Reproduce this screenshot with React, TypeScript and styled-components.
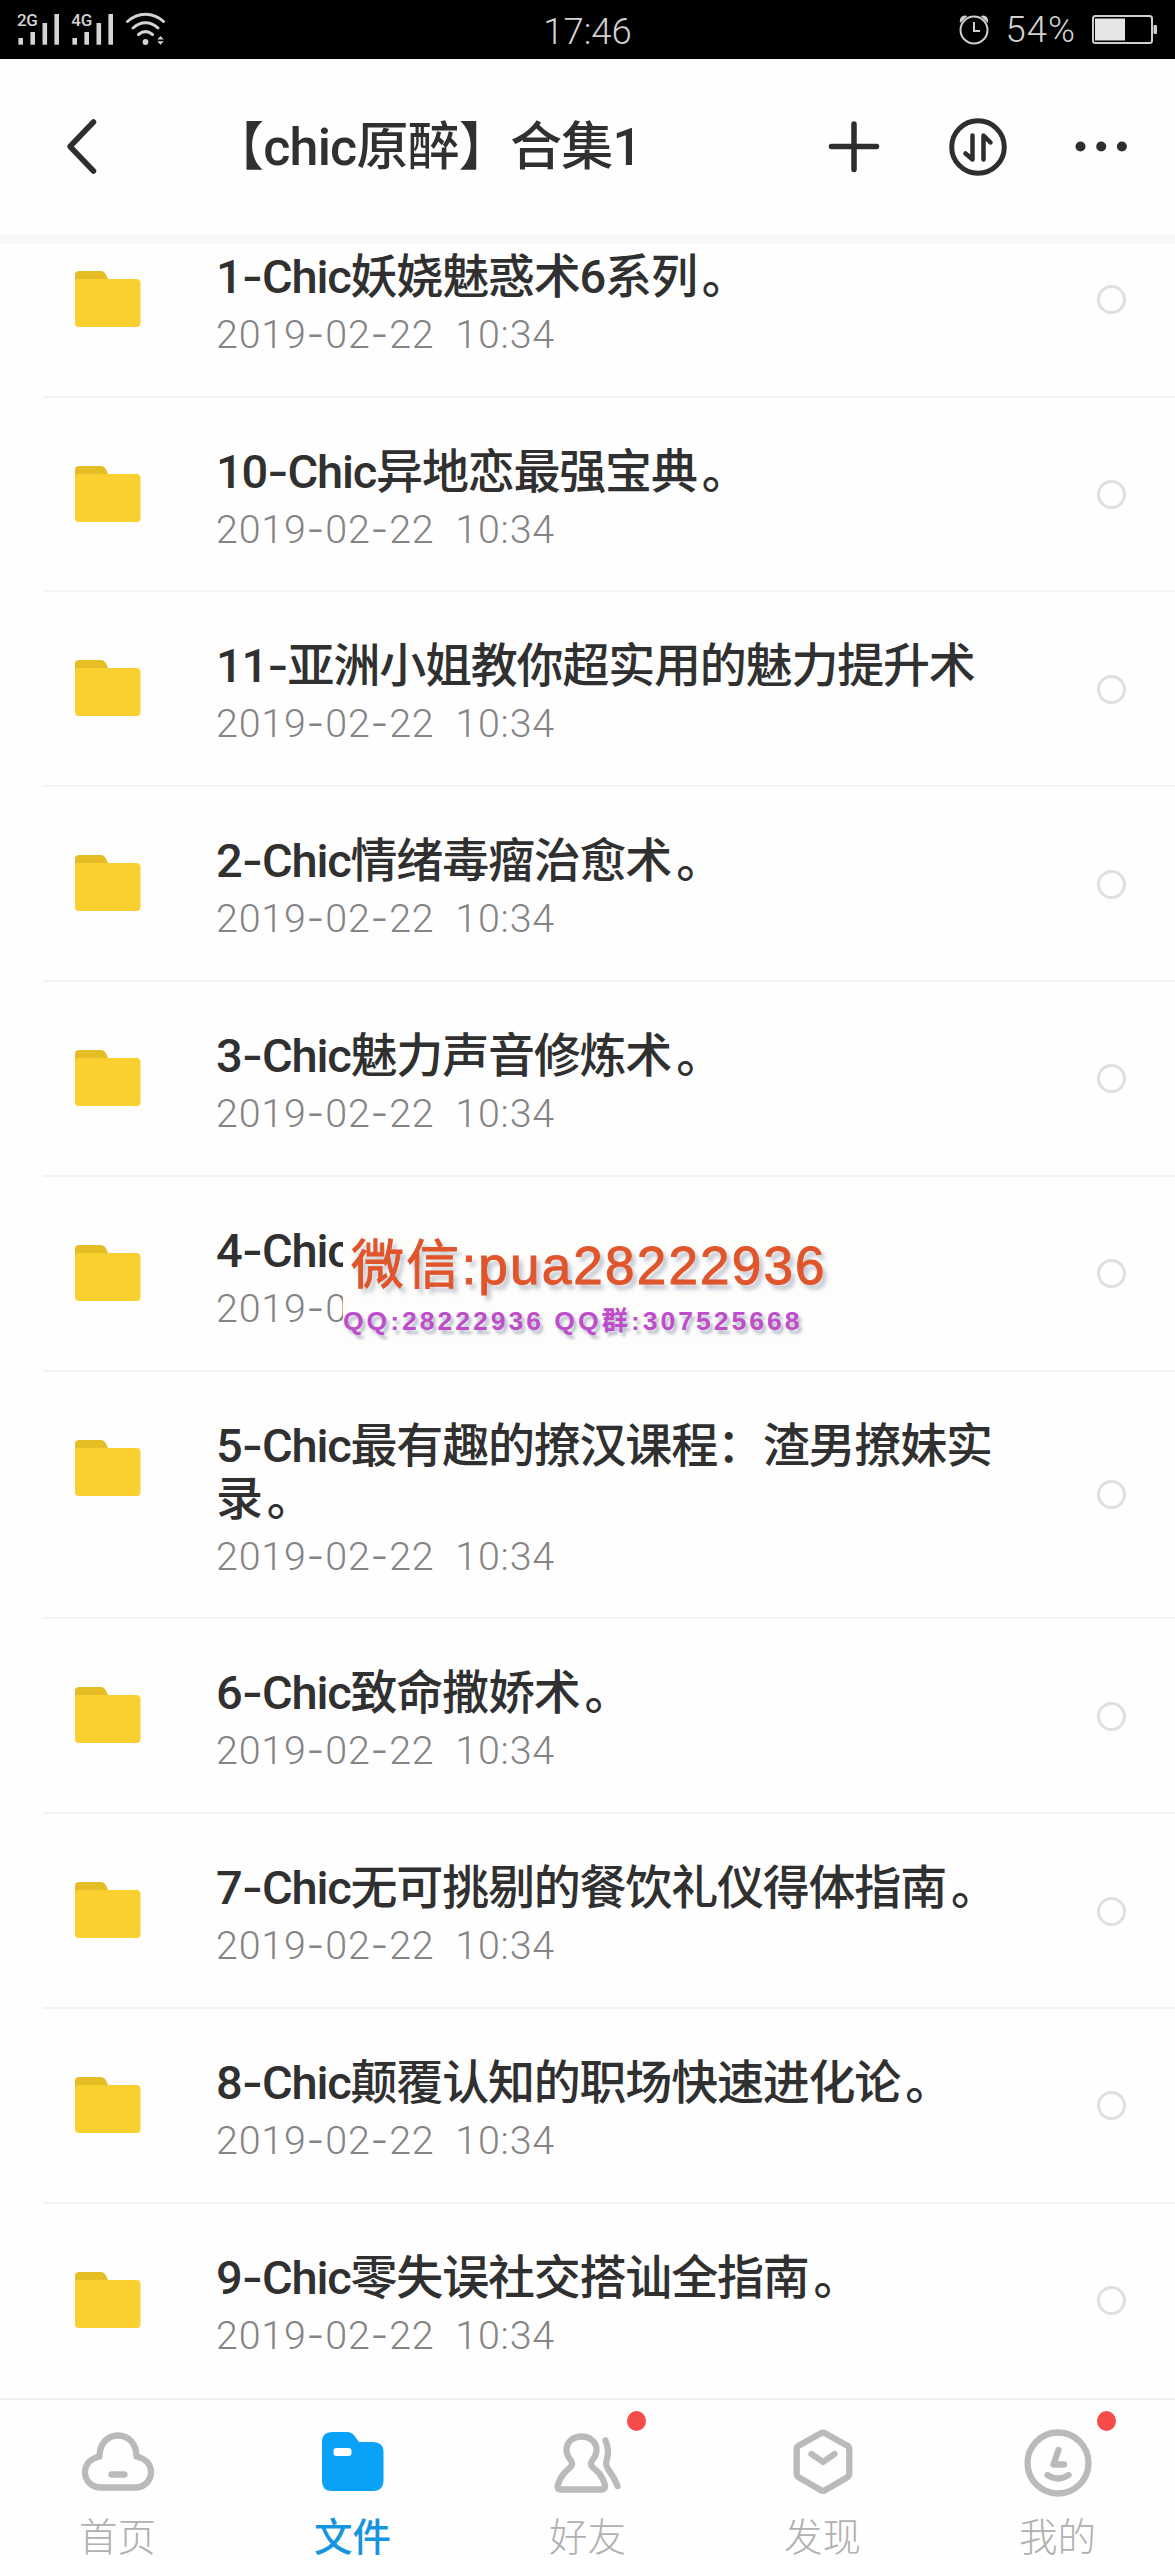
import React from "react";
import styled, { createGlobalStyle } from "styled-components";

const UI = `Roboto, "Noto Sans CJK SC", sans-serif`;

const GlobalStyle = createGlobalStyle`
  body { margin: 0; background: #fefefe; font-family: ${UI}; }
`;

const Screen = styled.div`
  width: 1175px;
  height: 2560px;
  display: flex;
  flex-direction: column;
  overflow: hidden;
  background: #fefefe;
`;

const StatusBar = styled.div`
  height: 59px;
  flex: none;
  box-sizing: border-box;
  display: grid;
  grid-template-columns: 1fr auto 1fr;
  background: #000;
  color: #d2d2d2;
`;

const Signals = styled.div`
  display: flex;
  padding-left: 16px;
`;

const StatusRight = styled.div`
  display: flex;
  justify-content: flex-end;
  padding-right: 16px;
`;

const StatusText = styled.span<{ $top: number; $gap?: number; $track?: number }>`
  font-size: 36.5px;
  font-weight: 300;
  line-height: 36px;
  letter-spacing: ${(p) => p.$track ?? 0}px;
  padding-top: ${(p) => p.$top}px;
  margin-right: ${(p) => p.$gap ?? 0}px;
`;

const SignalBox = styled.div`
  position: relative;
  width: 54.3px;
`;

const Network = styled.span`
  position: absolute;
  left: 1px;
  top: 10px;
  font: 500 17px/20px Roboto, sans-serif;
  letter-spacing: -0.3px;
`;

const NavBar = styled.header`
  height: 176px;
  flex: none;
  display: flex;
  align-items: center;
`;

const BackButton = styled.div`
  width: 212px;
  flex: none;
  display: flex;
  box-sizing: border-box;
  padding-left: 64px;
`;

const Title = styled.h1`
  margin: 0;
  padding-top: 2px;
  flex: 1;
  font-size: 52px;
  line-height: 60px;
  font-weight: 500;
  letter-spacing: -0.8px;
  color: #303030;
  white-space: nowrap;
`;

const Actions = styled.div`
  display: flex;
  align-items: center;
  gap: 66px;
  padding-right: 47px;
`;

const Band = styled.div`
  height: 9px;
  flex: none;
  background: #f8f8f8;
`;

const List = styled.main`
  height: 2154px;
  flex: none;
`;

const Row = styled.div<{ $first?: boolean; $last?: boolean }>`
  position: relative;
  display: flex;
  box-sizing: border-box;
  margin-left: 43px;
  padding: ${(p) => (p.$first ? 5.8 : 47)}px 49px 0 32px;
  border-bottom: 2px solid ${(p) => (p.$last ? "transparent" : "#f3f3f3")};
`;

const FolderSlot = styled.div`
  width: 141px;
  flex: none;
  padding-top: 21px;
`;

const Info = styled.div`
  width: 800px;
  flex: none;
  padding-bottom: 38.8px;
`;

const Name = styled.div`
  font-size: 47px;
  line-height: 53px;
  font-weight: 500;
  letter-spacing: -1.2px;
  color: #303030;
`;

const DateLine = styled.div`
  margin-top: 10px;
  font-size: 39.4px;
  line-height: 44px;
  font-weight: 300;
  letter-spacing: 0.8px;
  color: #848484;
  white-space: pre;
`;

const Dash = styled.span`
  font-family: Inter, sans-serif;
  line-height: 1;
`;

const Stop = styled.span`
  margin-left: 5px;
`;

const CheckSlot = styled.div`
  flex: 1;
  display: flex;
  align-items: center;
  justify-content: flex-end;
  margin-top: -46px;
`;

const Radio = styled.span`
  width: 29px;
  height: 29px;
  box-sizing: border-box;
  border: 3px solid #dfdfdf;
  border-radius: 50%;
`;

const Stamp = styled.div`
  position: absolute;
  left: 300px;
  top: 28px;
  width: 490px;
  height: 150px;
  background: #fdfdfc;
  white-space: nowrap;
`;

const StampMain = styled.div`
  padding: 31.5px 0 0 8px;
  font: 400 53px/60px "Liberation Sans", "Noto Sans CJK SC", sans-serif;
  letter-spacing: 2.2px;
  color: #e0552b;
  -webkit-text-stroke: 1px #e0552b;
  text-shadow: 4px 5px 4px rgba(90, 100, 130, 0.4);
`;

const StampSub = styled.div`
  margin-top: 10px;
  font: 700 26.5px/30px "Liberation Sans", "Noto Sans CJK SC", sans-serif;
  letter-spacing: 3px;
  color: #bf4dcb;
  text-shadow: 3px 4px 3px rgba(90, 100, 130, 0.4);
`;

const TabBar = styled.nav`
  height: 162px;
  box-sizing: border-box;
  border-top: 2px solid #f1f1f1;
  flex: none;
  display: grid;
  grid-template-columns: repeat(5, 1fr);
`;

const Tab = styled.div<{ $active?: boolean }>`
  position: relative;
  display: flex;
  flex-direction: column;
  align-items: center;
  padding-top: 28px;
  color: ${(p) => (p.$active ? "#1594df" : "#b0b0b0")};
  font-family: "Noto Sans CJK SC", sans-serif;
  font-size: 38.5px;
  font-weight: ${(p) => (p.$active ? 500 : 300)};
  line-height: 44px;
`;

const TabIcon = styled.svg`
  width: 74px;
  height: 70px;
  margin-bottom: 14px;
  fill: none;
  stroke: #b9bbba;
  stroke-width: 6.3;
  stroke-linecap: round;
  stroke-linejoin: round;
`;

const Badge = styled.span`
  position: absolute;
  left: 157px;
  top: 11px;
  width: 19px;
  height: 20px;
  border-radius: 50%;
  background: #f44b4b;
`;

const Signal = ({ label }: { label: string }) => (
  <SignalBox>
    <Network>{label}</Network>
    <svg width="50" height="59" fill="#d4d4d4">
      <rect x="2.4" y="38" width="4.6" height="6.7" />
      <rect x="14.4" y="32" width="4.6" height="12.7" />
      <rect x="26.5" y="23" width="4.6" height="21.7" />
      <rect x="38.4" y="14" width="4.6" height="30.7" />
    </svg>
  </SignalBox>
);

const Wifi = () => (
  <svg width="44" height="59" fill="none" stroke="#d4d4d4" strokeWidth="3" strokeLinecap="round">
    <path d="M2.5 21.5C13 11.8 28 11.8 38.5 21.5" />
    <path d="M8 28C15.5 21 25.500 21 33 28" />
    <path d="M13.500 34.500C18 30.800 23 30.800 27.500 34.500" />
    <circle cx="20.500" cy="42" r="2.900" fill="#d4d4d4" stroke="none" />
    <path d="M32.300 39.500L35.500 36L38.700 39.500ZM32.300 41.300L35.500 44.800L38.700 41.300Z" fill="#d4d4d4" stroke="none" />
  </svg>
);

const AlarmIcon = styled.svg`
  margin-right: 16px;
`;

const Alarm = () => (
  <AlarmIcon width="32" height="59" fill="none" stroke="#cfcfcf" strokeWidth="2">
    <circle cx="16" cy="30" r="13.500" />
    <path d="M16 22V31H22" />
    <path d="M2 23C1 17 5 14 9.500 16L2 23ZM30 23C31 17 27 14 22.500 16L30 23Z" fill="#cfcfcf" stroke="none" />
  </AlarmIcon>
);

const Battery = () => (
  <svg width="68" height="59" fill="none">
    <rect x="2" y="16" width="59" height="27" rx="2.500" stroke="#cfcfcf" strokeWidth="2" />
    <rect x="4" y="18.500" width="30" height="22" fill="#e6e6e6" />
    <rect x="62.500" y="25" width="3.500" height="9" rx="1" fill="#cfcfcf" />
  </svg>
);

const FolderSvg = styled.svg`
  display: block;
`;

const FolderIcon = () => (
  <FolderSvg width="66" height="57" viewBox="0 0 66 57">
    <path d="M0 14V4Q0 0 4 0H26Q29 0 31 3.500L35 12V20H0Z" fill="#e5bd25" />
    <path d="M0 9.500Q0 8 2 8H61Q65.500 8 65.500 12V52Q65.500 56 61.500 56H4Q0 56 0 52Z" fill="#f9d02f" />
  </FolderSvg>
);

const styledText = (text: string) =>
  text.split(/([-。])/).map((part, i) => {
    if (part === "-") return <Dash key={i}>-</Dash>;
    if (part === "。") return <Stop key={i}>。</Stop>;
    return part;
  });

const DATE = "2019-02-22  10:34";

const files: { name: string; date?: string; stamp?: boolean }[] = [
  { name: "1-Chic妖娆魅惑术6系列。" },
  { name: "10-Chic异地恋最强宝典。" },
  { name: "11-亚洲小姐教你超实用的魅力提升术" },
  { name: "2-Chic情绪毒瘤治愈术。" },
  { name: "3-Chic魅力声音修炼术。" },
  { name: "4-Chic", date: "2019-0", stamp: true },
  { name: "5-Chic最有趣的撩汉课程：渣男撩妹实录。" },
  { name: "6-Chic致命撒娇术。" },
  { name: "7-Chic无可挑剔的餐饮礼仪得体指南。" },
  { name: "8-Chic颠覆认知的职场快速进化论。" },
  { name: "9-Chic零失误社交搭讪全指南。" },
];

export default function App() {
  return (
    <>
      <GlobalStyle />
      <Screen>
        <StatusBar>
          <Signals>
            <Signal label="2G" />
            <Signal label="4G" />
            <Wifi />
          </Signals>
          <StatusText $top={14}>17:46</StatusText>
          <StatusRight>
            <Alarm />
            <StatusText $top={12} $gap={15} $track={1}>54%</StatusText>
            <Battery />
          </StatusRight>
        </StatusBar>

        <NavBar>
          <BackButton>
            <svg width="36" height="60" fill="none" stroke="#2e2e2e" strokeWidth="5.500" strokeLinecap="round" strokeLinejoin="round">
              <path d="M29.500 5L6 29.500L29.500 54" />
            </svg>
          </BackButton>
          <Title>【chic原醉】合集1</Title>
          <Actions>
            <svg width="56" height="60" fill="none" stroke="#2e2e2e" strokeWidth="5.500" strokeLinecap="round">
              <path d="M28 7V52.500M5.500 29.500H50.500" />
            </svg>
            <svg width="60" height="60" fill="none" stroke="#2e2e2e" strokeWidth="5" strokeLinecap="round" strokeLinejoin="round">
              <circle cx="30" cy="30" r="26.300" />
              <path d="M24.500 18.500V42.500L17.500 36.500M35.500 42.500V18.500L42.500 25.500" strokeWidth="4.500" />
            </svg>
            <svg width="54" height="60" fill="#2e2e2e">
              <circle cx="6.500" cy="29.500" r="5" />
              <circle cx="27.200" cy="29.500" r="5" />
              <circle cx="47.900" cy="29.500" r="5" />
            </svg>
          </Actions>
        </NavBar>
        <Band />

        <List>
          {files.map((f, i) => (
            <Row key={f.name} $first={i === 0} $last={i === files.length - 1}>
              <FolderSlot>
                <FolderIcon />
              </FolderSlot>
              <Info>
                <Name>{styledText(f.name)}</Name>
                <DateLine>{styledText(f.date ?? DATE)}</DateLine>
              </Info>
              <CheckSlot>
                <Radio />
              </CheckSlot>
              {f.stamp && (
                <Stamp>
                  <StampMain>微信:pua28222936</StampMain>
                  <StampSub>QQ:28222936 QQ群:307525668</StampSub>
                </Stamp>
              )}
            </Row>
          ))}
        </List>

        <TabBar>
          <Tab>
            <TabIcon viewBox="0 0 74 70">
              <path d="M18.500 28.500C18.500 16 26 7.500 37 7.500S55.500 16 55.500 28.500C64 30.500 70 36 70 44C70 53 63 59.500 54 59.500H20C11 59.500 4 53 4 44C4 36 10 30.500 18.500 28.500Z" />
              <path d="M30.500 46.500H43.500" />
            </TabIcon>
            首页
          </Tab>
          <Tab $active>
            <TabIcon viewBox="0 0 74 70">
              <path d="M16 4H31Q36 4 39 8.500L43 14H57Q67.500 14 67.500 24V52Q67.500 63 57 63H16Q6 63 6 53V14Q6 4 16 4Z" fill="#0aa2f9" stroke="none" />
              <rect x="17.500" y="20" width="18" height="8" rx="3" fill="#fff" stroke="none" />
            </TabIcon>
            文件
          </Tab>
          <Tab>
            <TabIcon viewBox="0 0 74 70">
              <path d="M10 61.500C7 61.500 6 59.500 6.800 57C9 48.500 14 44 19 39.500C22 36.500 21.500 35 19.500 32C17 28.500 15.500 26 15.500 22C15.500 14 22 8.500 30.500 8.500S45.500 14 45.500 22C45.500 26 44 28.500 41.500 32C39.500 35 39 36.500 42 39.500C47 44 52 48.500 54 57C54.500 59.500 53.500 61.500 51 61.500Z" />
              <path d="M54.500 12.500C58 21 57.500 27 55.500 32.500C54.500 36.500 55 38.500 58 42.500C62 48 64.500 52.500 66.500 58" />
            </TabIcon>
            好友
            <Badge />
          </Tab>
          <Tab>
            <TabIcon viewBox="0 0 74 70">
              <path d="M34.500 5.500Q37 4 39.500 5.500L61 17.500Q63.300 19 63.300 21.500V45.500Q63.300 48 61 49.500L39.500 62Q37 63.500 34.500 62L13 49.500Q10.700 48 10.700 45.500V21.500Q10.700 19 13 17.500Z" />
              <path d="M25.500 26L37 34L48.500 26" />
            </TabIcon>
            发现
          </Tab>
          <Tab>
            <TabIcon viewBox="0 0 74 70">
              <circle cx="37" cy="35" r="30.500" />
              <path d="M37.500 22L32.500 36.500H43" />
              <path d="M26.500 47Q37 54 47.500 47" />
            </TabIcon>
            我的
            <Badge />
          </Tab>
        </TabBar>
      </Screen>
    </>
  );
}
